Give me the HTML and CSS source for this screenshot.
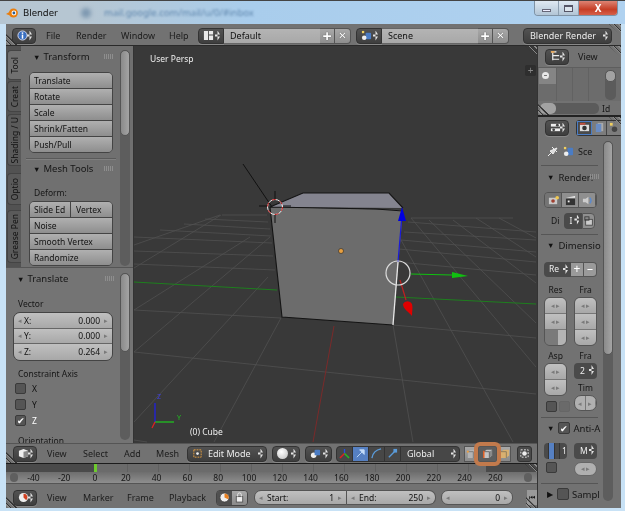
FILE: index.html
```html
<!DOCTYPE html>
<html lang="en">
<head>
<meta charset="utf-8">
<title>Blender</title>
<link rel="stylesheet" href="styles.css">
</head>
<body>
<div class="window">
  <header class="titlebar">
    <svg class="logo" viewBox="0 0 14 12"><circle cx="8" cy="6" r="4.800" fill="#e87d0d"/><circle cx="8.500" cy="6" r="2.600" fill="#fff"/><circle cx="8.500" cy="6" r="1.500" fill="#2a5f96"/><path d="M0 7l5-3v5z" fill="#e87d0d"/></svg>
    <span class="app-title">Blender</span>
    <i class="blur-dot"></i>
    <span class="blurred-tab">mail.google.com/mail/u/0/#inbox</span>
    <div class="win-controls">
      <span class="win-btn"><i class="min"></i></span>
      <span class="win-btn w-max"><i class="max"></i></span>
      <span class="win-btn close">X</span>
    </div>
  </header>
  <div class="app">
    <div class="menubar">
      <span class="pick w24"><svg class="ic" viewBox="0 0 12 12"><circle cx="6" cy="6" r="5" fill="#3a6fc0" stroke="#dde"/><rect x="5.200" y="5" width="1.600" height="4.500" fill="#fff"/><rect x="5.200" y="2.600" width="1.600" height="1.600" fill="#fff"/></svg><b class="updown"></b></span>
      <nav class="menu m-top"><span>File</span><span>Render</span><span>Window</span><span>Help</span></nav>
      <span class="pick w26"><svg class="ic" viewBox="0 0 12 12"><path d="M1 1h4.500v10H1zM6.500 1H11v4H6.500zM6.500 6H11v5H6.500z" fill="#e8e8e8"/></svg><b class="updown"></b></span>
      <span class="field">Default</span>
      <span class="sq">+</span><span class="sq last">✕</span>
      <span class="pick w26 l-scene"><svg class="ic" viewBox="0 0 12 12"><rect x="5" y="3" width="6" height="7" rx="1" fill="#4a7cc4"/><circle cx="3.500" cy="8.500" r="2.500" fill="#eee"/><rect x="1" y="1" width="2.500" height="2.500" fill="#f0d060"/></svg><b class="updown"></b></span>
      <span class="field">Scene</span>
      <span class="sq">+</span><span class="sq last">✕</span>
      <span class="pick render">Blender Render<b class="updown"></b></span>
      <i class="hatch h-tr"></i><i class="hatch h-bl"></i>
    </div>
    <div class="middle">
      <div class="main-col">
        <div class="work">
          <aside class="left">
            <div class="tool-shelf">
              <div class="tabs">
                <span class="tab active t-tool"><em>Tool</em></span>
                <span class="tab t-creat"><em>Creat</em></span>
                <span class="tab t-shade"><em>Shading / U</em></span>
                <span class="tab t-optio"><em>Optio</em></span>
                <span class="tab t-grease"><em>Grease Pen</em></span>
              </div>
              <div class="shelf-body">
                <h3 class="ph"><span class="tri">▼</span>Transform<span class="grip"></span></h3>
                <div class="stack s-transform">
                  <button>Translate</button><button>Rotate</button><button>Scale</button><button>Shrink/Fatten</button><button>Push/Pull</button>
                </div>
                <hr class="sep">
                <h3 class="ph"><span class="tri">▼</span>Mesh Tools<span class="grip"></span></h3>
                <p class="label deform">Deform:</p>
                <div class="stack">
                  <div class="pair"><button class="slide">Slide Ed</button><button class="vertex">Vertex</button></div>
                  <button>Noise</button><button>Smooth Vertex</button><button>Randomize</button>
                </div>
              </div>
              <div class="scroll s-shelf"><i></i></div>
            </div>
            <div class="redo">
              <div class="redo-body">
                <h3 class="ph"><span class="tri">▼</span>Translate<span class="grip"></span></h3>
                <p class="label vector">Vector</p>
                <div class="num-stack">
                  <div class="num"><span class="arr">◂</span><span>X:</span><span class="val">0.000</span><span class="arr">▸</span></div>
                  <div class="num"><span class="arr">◂</span><span>Y:</span><span class="val">0.000</span><span class="arr">▸</span></div>
                  <div class="num"><span class="arr">◂</span><span>Z:</span><span class="val">0.264</span><span class="arr">▸</span></div>
                </div>
                <p class="label cons">Constraint Axis</p>
                <div class="check"><i class="box"></i>X</div>
                <div class="check"><i class="box"></i>Y</div>
                <div class="check on"><i class="box">✔</i>Z</div>
                <p class="label orient">Orientation</p>
              </div>
              <div class="scroll s-redo"><i></i></div>
            </div>
          </aside>
          <section class="viewport">
            <svg class="scene" viewBox="134 46 402 397" aria-hidden="true">
              <g class="grid">
                <path d="M222 215H267M205 219L268 222M184 224L270 229M160 230L271 236M134 237L272 243M134 251L273 256M134 264L275 270M134 310L281 318M134 352L536 394M134 440L147 442"/>
                <path d="M411 218H513M408 222L536 232M404 232L536 240M401 240L536 252M399 249L536 262M398 262L536 275M393 325L536 338"/>
                <path d="M134 422L268 277M214 442L281 318M134 352L270 237M134 310L250 237M134 268L221 215M134 245L220 215"/>
                <path d="M393 325L413 442M401 240L513 442M411 218L536 367M429 220L536 323M453 220L536 283M476 218L536 257M499 218L536 238"/>
              </g>
              <path class="axis-x" d="M134 282L277 290M396 297L536 304"/>
              <path class="axis-y" d="M334 326L313 442"/>
              <path class="lamp" d="M243 164L272 207"/>
              <polygon class="cube-top" points="270,207 303,193 389,193 403,208"/>
              <polygon class="cube-front" points="270,207 403,210 393,325 282,317"/>
              <path class="cube-edge" d="M270 207L303 193H389L403 208M270 207L376 209L403 211M270 207L282 317L393 325"/>
              <path class="cube-sel" d="M398 262L393 325"/>
              <circle cx="341" cy="251" r="2.500" fill="#e8a040" stroke="#222" stroke-width=".6"/>
              <path class="m-blue" d="M398 262L402 215"/>
              <polygon fill="#0000e0" points="402,207 398,221 406,221"/>
              <path class="m-green" d="M411 274L452 275"/>
              <polygon fill="#10c010" points="452,272 452,278 468,276"/>
              <path class="m-red" d="M400 280L406 300"/>
              <path fill="#e00000" d="M403 304a5 5 0 0 1 9 0c1 4 0 7 0 12c-3-4-9-7-9-12z"/>
              <circle class="m-ring" cx="398" cy="273" r="12"/>
              <circle class="c-white" cx="275" cy="207" r="7.500"/>
              <circle class="c-red" cx="275" cy="207" r="7.500"/>
              <path class="c-cross" d="M275 191V199M275 215V223M259 206H267M283 206H291"/>
              <g class="widget"><path class="w-z" d="M155 422V403"/><path class="w-y" d="M155 422H174"/><path class="w-x" d="M155 422L152 428"/></g>
            </svg>
            <span class="vp-label persp">User Persp</span>
            <span class="vp-label cube-name">(0) Cube</span>
            <span class="vp-label wz">Z</span>
            <span class="vp-label wy">Y</span>
            <span class="vp-plus">+</span>
            <i class="hatch h-tr"></i>
          </section>
        </div>
        <div class="vp-header">
          <span class="pick w24"><svg class="ic" viewBox="0 0 12 12"><path d="M1 3l5-2 5 2v6l-5 2-5-2z" fill="#eee"/><path d="M6 4v7l5-2V3z" fill="#888"/></svg><b class="updown"></b></span>
          <nav class="menu m-vp"><span>View</span><span>Select</span><span>Add</span><span>Mesh</span></nav>
          <span class="pick mode"><svg class="ic" viewBox="0 0 12 12"><rect x="2" y="2" width="8" height="8" fill="none" stroke="#e8a040" stroke-dasharray="2 1"/><circle cx="6" cy="6" r="1.500" fill="#eee"/></svg>Edit Mode<b class="updown"></b></span>
          <span class="pick shade"><i class="sphere"></i><b class="updown"></b></span>
          <span class="pick pivot"><svg class="ic" viewBox="0 0 12 12"><circle cx="4" cy="8" r="3" fill="#eee"/><rect x="5" y="2" width="6" height="6" rx="1" fill="#4a7cc4"/></svg><b class="updown"></b></span>
          <div class="manip">
            <span><svg class="ic" viewBox="0 0 12 12"><path d="M6 6V1" stroke="#2850e0" stroke-width="1.500"/><path d="M6 6L1 11" stroke="#e02020" stroke-width="1.500"/><path d="M6 6L11 11" stroke="#20c020" stroke-width="1.500"/></svg></span>
            <span class="active"><svg class="ic" viewBox="0 0 12 12"><path d="M2 10L9 3M5 2h5v5z" stroke="#c4dcf8" fill="#c4dcf8"/></svg></span>
            <span><svg class="ic" viewBox="0 0 12 12"><path d="M1 11C2 5 5 2 11 1" stroke="#5a9ad8" fill="none" stroke-width="1.500"/></svg></span>
            <span><svg class="ic" viewBox="0 0 12 12"><path d="M2 10L8 4" stroke="#5a9ad8" stroke-width="1.500"/><rect x="7" y="1" width="4" height="4" fill="#5a9ad8"/></svg></span>
            <span class="global">Global<b class="updown"></b></span>
          </div>
          <div class="selmode">
            <span><svg class="ic" viewBox="0 0 12 12"><path d="M2 4l3-2h6v6l-3 3H2z" fill="#b4b4b4"/><path d="M2 4h6v7" fill="none" stroke="#777"/><rect x="1" y="3" width="2" height="2" fill="#f0a040"/></svg></span>
            <span class="hl"><svg class="ic" viewBox="0 0 12 12"><path d="M2 4l3-2h6v6l-3 3H2z" fill="#c4c4c4"/><path d="M8 4v7L11 8V2z" fill="#8a8a8a"/><path d="M2 4h6v7" fill="none" stroke="#666"/><path d="M2 3v8" stroke="#f06020" stroke-width="1.500"/></svg></span>
            <span><svg class="ic" viewBox="0 0 12 12"><path d="M2 4l3-2h6v6l-3 3H2z" fill="#d8b070"/><path d="M2 4h6v7" fill="none" stroke="#8a7a5a"/></svg></span>
          </div>
          <span class="occl"><svg class="ic" viewBox="0 0 12 12"><rect x="2" y="2" width="8" height="8" fill="none" stroke="#eee" stroke-dasharray="2 1.500"/><circle cx="6" cy="6" r="2.500" fill="#eee"/></svg></span>
          <i class="hatch h-bl"></i>
        </div>
        <div class="timeline">
          <div class="strip"><i class="st-a"></i><i class="st-frame"></i><i class="st-b"></i><i class="st-a st-end"></i></div>
          <div class="ruler">
            <i class="knob"></i>
            <span>-40</span><span>-20</span><span>0</span><span>20</span><span>40</span><span>60</span><span>80</span><span>100</span><span>120</span><span>140</span><span>160</span><span>180</span><span>200</span><span>220</span><span>240</span><span>260</span>
            <i class="knob k-end"></i>
          </div>
          <i class="hatch h-tr"></i>
        </div>
        <div class="tl-header">
          <span class="pick w24"><svg class="ic" viewBox="0 0 12 12"><circle cx="6" cy="6" r="5" fill="#eee"/><path d="M6 6V2A4 4 0 0 1 9 9z" fill="#d04020"/></svg><b class="updown"></b></span>
          <nav class="menu m-tl"><span>View</span><span>Marker</span><span>Frame</span><span>Playback</span></nav>
          <div class="lockpair"><span><svg class="ic" viewBox="0 0 12 12"><circle cx="6" cy="6" r="5" fill="#eee" stroke="#444"/><path d="M6 6V1.500A4.500 4.500 0 0 1 10 8z" fill="#e88020"/></svg></span><span><svg class="ic" viewBox="0 0 12 12"><rect x="2.500" y="5" width="7" height="6" fill="#eee" stroke="#555"/><path d="M4 5V3a2 2 0 0 1 4 0v2" fill="none" stroke="#eee"/></svg></span></div>
          <div class="range r-start"><span class="arr">◂</span><span>Start:</span><span class="val">1</span><span class="arr">▸</span></div>
          <div class="range r-end"><span class="arr">◂</span><span>End:</span><span class="val">250</span><span class="arr">▸</span></div>
          <div class="range r-cur"><span class="arr">◂</span><span class="val">0</span><span class="arr">▸</span></div>
          <span class="jump">⏮</span>
          <i class="hatch h-bl"></i><i class="hatch h-br"></i>
        </div>
      </div>
      <aside class="right">
        <div class="outliner">
          <div class="out-head"><span class="pick w24"><svg class="ic" viewBox="0 0 12 12"><path d="M1 1h6M3 2v8M3 5h7M3 9h7" stroke="#eee" stroke-width="1.300" fill="none"/><path d="M1 1h4" stroke="#f0a040" stroke-width="1.500"/></svg><b class="updown"></b></span><span class="out-view">View</span></div>
          <div class="out-grid">
            <span class="out-row"><i class="minus">–</i></span><i class="gl g1"></i><i class="gl g2"></i><i class="gl g3"></i>
            <div class="v-thumb"><i></i></div>
          </div>
          <div class="out-foot"><div class="h-thumb"><i></i></div><span>Id</span></div>
          <i class="hatch h-tr"></i><i class="hatch h-bl"></i>
        </div>
        <div class="props">
          <div class="prop-head">
            <span class="pick w24"><svg class="ic" viewBox="0 0 12 12"><rect x="1" y="2" width="10" height="3" fill="#eee"/><rect x="1" y="7" width="10" height="3" fill="#eee"/><circle cx="8" cy="3.500" r="1.500" fill="#444"/><circle cx="4" cy="8.500" r="1.500" fill="#444"/></svg><b class="updown"></b></span>
            <div class="ctx"><span class="active"><svg class="ic" viewBox="0 0 12 12"><rect x="1" y="3" width="10" height="7" fill="#ddd"/><circle cx="6" cy="6.500" r="2.500" fill="#333"/><rect x="1" y="1" width="6" height="2" fill="#c05040"/></svg></span><span><svg class="ic" viewBox="0 0 12 12"><rect x="4" y="1" width="6" height="9" fill="#aaa"/><rect x="2" y="2" width="6" height="9" fill="#6a8cc4"/></svg></span><span><svg class="ic" viewBox="0 0 12 12"><circle cx="6" cy="8" r="3" fill="#444"/><rect x="1" y="1" width="3" height="3" fill="#f0d060"/></svg></span></div>
            <i class="hatch h-tr"></i>
          </div>
          <div class="prop-body">
            <div class="prop-col">
              <div class="ctx-row"><svg class="pin" viewBox="0 0 12 12"><path d="M1 11L5 7M5 2l5 5M3 6l3 3 4-6z" stroke="#eee" fill="#ddd"/></svg><svg class="ic" viewBox="0 0 12 12"><rect x="5" y="2" width="6" height="8" rx="1" fill="#4a7cc4"/><circle cx="3.500" cy="8.500" r="2.500" fill="#eee"/><rect x="1" y="1" width="2.500" height="2.500" fill="#f0d060"/></svg><span>Sce</span></div>
              <hr class="psep">
              <h3 class="ph2"><span class="tri">▼</span>Render:<span class="grip g-r"></span></h3>
              <div class="tri-btn">
                <span><svg class="ic" viewBox="0 0 12 12"><rect x="1" y="3" width="9" height="7" fill="#c8c8c8"/><circle cx="5.500" cy="6.500" r="2" fill="#a04030"/><circle cx="10" cy="3" r="2" fill="#f0c850"/></svg></span>
                <span><svg class="ic" viewBox="0 0 12 12"><rect x="1" y="4" width="10" height="7" fill="#333"/><path d="M1 3l10-2v2z" fill="#eee"/><rect x="3" y="6" width="2" height="2" fill="#eee"/></svg></span>
                <span><svg class="ic" viewBox="0 0 12 12"><path d="M1 4h3l3-2v8l-3-2H1z" fill="#ccc"/><path d="M8.500 3a4 4 0 0 1 0 6" stroke="#5a8ad0" fill="none" stroke-width="1.500"/></svg></span>
              </div>
              <div class="di-row"><span>Di</span><span class="di"><span class="di-pick">I<b class="updown"></b></span><span class="di-img"><svg class="ic" viewBox="0 0 12 12"><rect x="2" y="4" width="8" height="7" fill="#ccc" stroke="#444"/><rect x="1" y="1" width="5" height="4" fill="none" stroke="#333"/></svg></span></span></div>
              <hr class="psep p2">
              <h3 class="ph2"><span class="tri">▼</span>Dimensio</h3>
              <div class="re-row"><span class="re">Re<b class="updown"></b></span><span class="re-sq">+</span><span class="re-sq">–</span></div>
              <div class="grid2 g-labels"><span>Res</span><span>Fra</span></div>
              <div class="grid2">
                <div class="arrows"><span>◂ ▸</span><span>◂ ▸</span><span class="slider"></span></div>
                <div class="arrows"><span>◂ ▸</span><span>◂ ▸</span><span>◂ ▸</span></div>
              </div>
              <div class="grid2 g-labels g-asp"><span>Asp</span><span>Fra</span></div>
              <div class="grid2">
                <div class="asp-left">
                  <div class="arrows"><span>◂ ▸</span><span>◂ ▸</span></div>
                  <div class="two-checks"><i class="box"></i><i class="box dim"></i></div>
                </div>
                <div class="asp-right">
                  <span class="two-pick">2<b class="updown"></b></span>
                  <span class="tim">Tim</span>
                  <div class="tim-field"><span>◂</span><span>▸</span></div>
                </div>
              </div>
              <hr class="psep p3">
              <h3 class="ph2"><span class="tri">▼</span><i class="box boxh">✔</i><span class="clip">Anti-Al</span></h3>
              <div class="grid2 g-aa">
                <div class="aa-bar"><i></i><i class="blue"></i><i></i><span>1</span></div>
                <span class="two-pick">M<b class="updown"></b></span>
              </div>
              <div class="grid2 g-aa2"><div><i class="box"></i></div><div class="oval">◂ ▸</div></div>
              <hr class="psep p4">
              <h3 class="ph2"><span class="tri">▶</span><i class="box boxh"></i><span class="clip">Sampl</span></h3>
            </div>
            <div class="scroll s-prop"><i></i></div>
          </div>
        </div>
      </aside>
    </div>
  </div>
</div>
</body>
</html>
```

FILE: styles.css
```css
* { box-sizing: border-box; }
html, body { margin: 0; padding: 0; }
body { width: 625px; height: 511px; overflow: hidden; background: #c6dff2; font-family: "Noto Sans", "Open Sans", sans-serif; font-size: 8.5px; color: #111; }
.window { width: 625px; height: 511px; display: flex; flex-direction: column; padding: 0 4px 3px 5px; background: #c8e2f6; border-top: 1px solid #444; filter: blur(.4px); }
.titlebar { height: 23px; flex: none; display: flex; align-items: center; position: relative; background: linear-gradient(90deg, #b6c6d2 0, #b6c6d2 13%, #a9cdec 40%, #b0d2f0 100%); margin: 0 -4px 0 -5px; padding-left: 6px; }
.logo { width: 13px; height: 12px; }
.app-title { font-size: 9.5px; color: #111; width: 58px; margin-left: 4px; }
.blur-dot { width: 10px; height: 10px; border-radius: 50%; background: #7d98b0; filter: blur(2px); }
.blurred-tab { color: #5f86ad; font-size: 9.5px; margin-left: 13px; filter: blur(1.3px); }
.win-controls { position: absolute; right: 7px; top: 0; display: flex; height: 15px; border: 1px solid #7f92a4; border-top: 0; border-radius: 0 0 4px 4px; overflow: hidden; }
.win-btn { width: 24px; display: flex; align-items: center; justify-content: center; background: linear-gradient(#dfe9f2, #b2c5d6); border-right: 1px solid #8d9fb0; }
.w-max { width: 20px; }
.win-btn.close { width: 38px; background: linear-gradient(#dd8474, #c63e26 60%, #d6604a); color: #fff; font-weight: 700; font-size: 10px; border: 0; }
.min { width: 9px; height: 3px; background: #eef; border: 1px solid #667; margin-top: 5px; }
.max { width: 9px; height: 7px; border: 1px solid #556; border-top-width: 2px; background: #dde6ee; }

.hatch { position: absolute; width: 12px; height: 11px; background: repeating-linear-gradient(45deg, transparent 0 2px, #8a8a8a 2px 3px, #333 3px 4px); z-index: 2; }
.h-tr { right: 0; top: 0; clip-path: polygon(0 0, 100% 0, 100% 100%); }
.h-bl { left: 0; bottom: 0; clip-path: polygon(0 0, 100% 100%, 0 100%); }
.h-br { right: 0; bottom: 0; width: 11px; clip-path: polygon(0 0, 100% 100%, 0 100%); }

.app { flex: 1; min-height: 0; display: flex; flex-direction: column; background: #6f6f6f; margin-left: 1px; }
.menubar { height: 22px; flex: none; display: flex; align-items: center; padding: 2px 0 0 6px; background: #727272; border-bottom: 1px solid #2a2a2a; position: relative; }
.pick { height: 16px; background: linear-gradient(#525252, #3e3e3e); border: 1px solid #333; border-radius: 4px; display: flex; align-items: center; color: #ececec; flex: none; position: relative; padding-left: 4px; box-shadow: 0 1px 0 #888; }
.w24 { width: 24px; }
.w26 { width: 26px; border-radius: 4px 0 0 4px; }
.ic { width: 11px; height: 11px; flex: none; display: block; }
.updown { position: absolute; right: 3px; top: 2px; width: 5px; height: 10px; background: #e4e4e4; clip-path: polygon(50% 0, 100% 40%, 0 40%, 0 60%, 100% 60%, 50% 100%); }
.menu { display: flex; color: #1c1c1c; font-size: 9px; flex: none; }
.m-top { width: 152px; margin-left: 10px; }
.m-top span:nth-child(1) { width: 30px; }
.m-top span:nth-child(2) { width: 45px; }
.m-top span:nth-child(3) { width: 48px; }
.field { width: 96px; height: 16px; background: linear-gradient(#b4b4b4, #a8a8a8); border-top: 1px solid #666; border-bottom: 1px solid #666; display: flex; align-items: center; padding-left: 6px; color: #111; flex: none; font-size: 9px; }
.sq { width: 15px; height: 16px; background: linear-gradient(#a8a8a8, #8e8e8e); border: 1px solid #555; border-left: 0; display: flex; align-items: center; justify-content: center; color: #fff; font-size: 16px; font-weight: 700; line-height: 1; text-shadow: 0 0 1px #222; flex: none; }
.sq.last { border-radius: 0 4px 4px 0; font-size: 10px; font-family: "DejaVu Sans", sans-serif; width: 16px; }
.l-scene { margin-left: 5px; }
.render { width: 89px; margin-left: 14px; padding-left: 6px; font-size: 9px; }

.middle { flex: 1; min-height: 0; display: flex; }
.main-col { width: 531px; flex: none; display: flex; flex-direction: column; }
.work { height: 397px; flex: none; display: flex; }
.left { width: 128px; flex: none; display: flex; flex-direction: column; border-right: 1px solid #333; }
.tool-shelf { height: 222px; flex: none; display: flex; background: #707070; border-bottom: 1px solid #555; }
.tabs { width: 15px; flex: none; background: #525252; display: flex; flex-direction: column; align-items: flex-end; padding-top: 4px; }
.tab { width: 14px; background: #5a5a5a; border: 1px solid #444; border-right: 0; border-radius: 4px 0 0 4px; display: flex; align-items: center; justify-content: center; font-size: 8.5px; color: #111; }
.tab em { font-style: normal; writing-mode: vertical-rl; transform: rotate(180deg); white-space: nowrap; }
.tab.active { background: #707070; }
.t-tool { height: 30px; margin-bottom: 1px; }
.t-creat { height: 31px; margin-bottom: 2px; }
.t-shade { height: 52px; margin-bottom: 7px; }
.t-optio { height: 32px; margin-bottom: 5px; }
.t-grease { height: 53px; }
.shelf-body { width: 94px; flex: none; padding: 4px 0 0 8px; }
.ph { margin: 0; font-size: 9.5px; font-weight: 400; display: flex; align-items: center; height: 13px; color: #161616; position: relative; }
.tri { font-size: 7.5px; margin: 0 3px 0 4px; color: #111; }
.grip { position: absolute; right: 2px; top: 4px; width: 9px; height: 5px; background: repeating-linear-gradient(90deg, #8e8e8e 0 1px, transparent 1px 2px); }
.stack { width: 84px; border: 1px solid #444; border-radius: 5px; overflow: hidden; }
.s-transform { margin-top: 9px; }
.stack button, .pair { display: block; width: 100%; height: 16px; }
.stack button { background: linear-gradient(#b0b0b0, #8e8e8e); border: 0; border-bottom: 1px solid #444; padding: 0 0 0 4px; text-align: left; font: inherit; color: #111; white-space: nowrap; overflow: hidden; }
.stack > button:last-child { border-bottom: 0; height: 15px; }
.pair { display: flex; }
.pair .slide { width: 41px; flex: none; border-right: 1px solid #444; }
.pair .vertex { width: 43px; flex: none; padding-left: 5px; }
.sep { border: 0; border-top: 1px solid #5a5a5a; border-bottom: 1px solid #808080; margin: 5px 0 2px -3px; width: 90px; }
.label { margin: 0; color: #161616; font-size: 8.5px; height: 13px; line-height: 13px; }
.deform { margin: 11px 0 2px 5px; }
.scroll { width: 10px; border-radius: 5px; background: #5d5d5d; position: relative; flex: none; }
.scroll i { display: block; width: 100%; border-radius: 5px; background: linear-gradient(90deg, #8a8a8a, #a4a4a4); border: 1px solid #555; }
.s-shelf { margin: 4px 0 2px 5px; height: 216px; }
.s-shelf i { height: 86px; }
.redo { flex: 1; min-height: 0; display: flex; background: #747474; padding: 5px 0 0 7px; overflow: hidden; }
.redo-body { width: 100px; flex: none; }
.redo-body .ph { margin-top: -1px; }
.redo-body .grip { right: -1px; }
.vector { margin: 12px 0 2px 5px; }
.num-stack { width: 100px; border: 1px solid #444; border-radius: 7px; overflow: hidden; }
.num { height: 15.500px; display: flex; align-items: center; background: linear-gradient(#c0c0c0, #a8a8a8); border-bottom: 1px solid #666; padding: 0 4px; gap: 2px; }
.num:last-child { border-bottom: 0; }
.val { margin-left: auto; }
.arr { font-size: 7px; color: #7a7a7a; }
.num .val { margin-right: 2px; }
.cons { margin: 6px 0 1px 5px; }
.check { height: 16px; display: flex; align-items: center; margin-left: 2px; }
.box { display: inline-flex; width: 11px; height: 11px; background: #555; border: 1px solid #3a3a3a; border-radius: 2px; align-items: center; justify-content: center; color: #fff; font-style: normal; font-size: 9px; line-height: 1; flex: none; }
.check .box { margin-right: 6px; }
.check.on { color: #fff; }
.orient { margin: 5px 0 0 5px; }
.s-redo { margin-left: 7px; height: 167px; }
.s-redo i { height: 79px; }

.viewport { width: 403px; flex: none; position: relative; background: #393939; overflow: hidden; }
.scene { display: block; width: 402px; height: 397px; }
.grid path { stroke: #505050; stroke-width: .8; fill: none; }
.axis-x { stroke: #1e7f1e; fill: none; }
.axis-y { stroke: #7a2a2a; fill: none; }
.lamp { stroke: #111; fill: none; }
.cube-top { fill: #84848f; }
.cube-front { fill: #6c6c6c; }
.cube-edge { stroke: #141414; stroke-width: 1.100; fill: none; }
.cube-sel { stroke: #e8e8e8; stroke-width: 1.300; }
.m-blue { stroke: #1a1ad8; stroke-width: 1.200; }
.m-green { stroke: #10c010; stroke-width: 1.200; }
.m-red { stroke: #c02020; stroke-width: 1.200; }
.m-ring { fill: none; stroke: #dcdcdc; stroke-width: 1.200; }
.c-white { fill: none; stroke: #eee; stroke-width: 1; }
.c-red { fill: none; stroke: #c01818; stroke-width: 1; stroke-dasharray: 4 4; }
.c-cross { stroke: #111; stroke-width: 1; }
.w-z { stroke: #2020e0; stroke-width: 1.300; } .w-y { stroke: #20c020; stroke-width: 1.300; } .w-x { stroke: #e02020; stroke-width: 1.300; }
.vp-label { position: absolute; color: #eee; font-size: 8.5px; white-space: nowrap; }
.persp { left: 16px; top: 7px; }
.cube-name { left: 56px; top: 380px; }
.wz { left: 23px; top: 346px; font-size: 7px; color: #4040e0; }
.wy { left: 43px; top: 367px; font-size: 7px; color: #20c020; }
.vp-plus { position: absolute; left: 391px; top: 19px; width: 11px; height: 11px; background: #2e2e2e; color: #888; border-radius: 2px; text-align: center; line-height: 11px; font-size: 10px; }

.vp-header, .tl-header { flex: none; display: flex; align-items: center; background: #727272; padding-left: 7px; position: relative; }
.vp-header { height: 21px; border-top: 1px solid #555; border-bottom: 1px solid #1c1c1c; }
.m-vp { margin-left: 10px; width: 136px; }
.m-vp span:nth-child(1) { width: 36px; }
.m-vp span:nth-child(2) { width: 41px; }
.m-vp span:nth-child(3) { width: 32px; }
.mode { width: 80px; margin-left: 4px; padding-left: 4px; gap: 5px; font-size: 9px; }
.shade { width: 28px; margin-left: 5px; }
.sphere { width: 11px; height: 11px; border-radius: 50%; background: radial-gradient(circle at 40% 35%, #fff, #bbb); }
.pivot { width: 27px; margin-left: 5px; }
.manip { display: flex; margin-left: 4px; height: 16px; border: 1px solid #333; border-radius: 4px; overflow: hidden; background: #474747; flex: none; }
.manip > span { width: 16px; display: flex; align-items: center; justify-content: center; border-right: 1px solid #333; }
.manip > span.active { background: #5680c2; }
.manip > .global { width: 58px; color: #ececec; position: relative; justify-content: flex-start; padding-left: 6px; border: 0; font-size: 9px; }
.selmode { display: flex; margin-left: 4px; flex: none; height: 16px; }
.selmode span { width: 14px; background: linear-gradient(#a8a8a8, #8a8a8a); border: 1px solid #555; display: flex; align-items: center; justify-content: center; }
.selmode .hl { width: 19px; background: #5e5e5e; outline: 4px solid #c27a4c; outline-offset: 0; border-radius: 2px; position: relative; z-index: 1; }
.occl { width: 15px; height: 16px; margin-left: 6px; background: #4a4a4a; border: 1px solid #333; border-radius: 3px; display: flex; align-items: center; justify-content: center; }

.timeline { height: 20px; flex: none; background: #6f6f6f; border-bottom: 1px solid #555; position: relative; }
.strip { height: 8px; display: flex; background: #6b6b6b; }
.st-a { width: 88px; background: #4a4a4a; flex: none; }
.st-frame { width: 3px; background: #6ecb2e; flex: none; }
.st-b { width: 389px; background: repeating-linear-gradient(90deg, #6b6b6b 0 30px, #606060 30px 31px); flex: none; }
.st-end { flex: 1; width: auto; }
.ruler { height: 11px; display: flex; align-items: center; background: linear-gradient(#6e6e6e, #8e8e8e); padding-left: 12px; color: #161616; font-size: 8.5px; position: relative; }
.ruler span { width: 30.800px; text-align: center; flex: none; }
.knob { position: absolute; left: 4px; top: 1px; width: 8px; height: 9px; border-radius: 4px; background: #5f5f5f; }
.k-end { left: auto; right: 5px; }
.tl-header { flex: 1; min-height: 0; padding-top: 3px; }
.m-tl { margin-left: 10px; width: 169px; }
.m-tl span:nth-child(1) { width: 36px; }
.m-tl span:nth-child(2) { width: 44px; }
.m-tl span:nth-child(3) { width: 42px; }
.lockpair { display: flex; height: 16px; border: 1px solid #444; border-radius: 4px; overflow: hidden; flex: none; }
.lockpair span { width: 15px; display: flex; align-items: center; justify-content: center; background: linear-gradient(#a8a8a8, #8a8a8a); }
.lockpair span:first-child { background: #505050; width: 15px; }
.range { height: 15px; margin-left: 6px; display: flex; align-items: center; gap: 4px; padding: 0 4px; background: linear-gradient(#c0c0c0, #a8a8a8); border: 1px solid #555; flex: none; }
.r-start { width: 93px; border-radius: 7px 0 0 7px; }
.r-end { width: 89px; margin-left: 0; border-left: 0; border-radius: 0 7px 7px 0; }
.r-cur { width: 72px; margin-left: 5px; border-radius: 7px; }
.jump { width: 11px; height: 15px; margin-left: 14px; background: #9a9a9a; font-size: 7px; line-height: 15px; text-align: center; }

.right { width: 84px; flex: none; display: flex; flex-direction: column; background: #727272; border-left: 1px solid #333; }
.outliner { height: 71px; flex: none; border-bottom: 2px solid #222; position: relative; }
.out-head { height: 21px; display: flex; align-items: center; padding-left: 7px; }
.out-view { margin-left: 9px; color: #161616; font-size: 9px; }
.out-grid { height: 34px; background: #6c6c6c; position: relative; border-top: 1px solid #5e5e5e; }
.out-row { position: absolute; left: 1px; top: 0; width: 17px; height: 16px; background: #858585; }
.minus { position: absolute; left: 3px; top: 4px; width: 7px; height: 7px; border-radius: 50%; background: #e8e8e8; color: #222; font-size: 7px; line-height: 6px; text-align: center; font-style: normal; }
.gl { position: absolute; top: 0; bottom: 0; width: 1px; background: #626262; }
.g1 { left: 18px; } .g2 { left: 34px; } .g3 { left: 50px; }
.v-thumb { position: absolute; right: 5px; top: 2px; width: 11px; height: 30px; border-radius: 5px; background: #5b5b5b; }
.v-thumb i { display: block; height: 12px; border-radius: 5px; background: #a2a2a2; border: 1px solid #555; }
.out-foot { display: flex; align-items: center; height: 14px; padding: 0 0 0 2px; gap: 3px; color: #161616; }
.h-thumb { width: 59px; height: 11px; border-radius: 5px; background: #5b5b5b; }
.h-thumb i { display: block; width: 16px; height: 100%; border-radius: 5px; background: #a2a2a2; }
.props { flex: 1; min-height: 0; display: flex; flex-direction: column; overflow: hidden; }
.prop-head { height: 21px; flex: none; display: flex; align-items: center; padding-left: 7px; position: relative; overflow: hidden; }
.ctx { margin-left: 7px; display: flex; height: 16px; border: 1px solid #333; border-radius: 3px; flex: none; }
.ctx span { width: 15px; display: flex; align-items: center; justify-content: center; background: #7c7c7c; border-right: 1px solid #444; flex: none; }
.ctx span.active { background: #4a4a4a; outline: 1px solid #4a7cc4; outline-offset: -1px; }
.prop-body { flex: 1; min-height: 0; display: flex; padding: 3px 0 0 3px; }
.prop-col { width: 60px; flex: none; }
.s-prop { margin-left: 2px; height: 360px; }
.s-prop i { height: 214px; }
.ctx-row { display: flex; align-items: center; height: 16px; gap: 4px; padding-left: 6px; color: #161616; margin-top: 2px; font-size: 9px; }
.pin { width: 12px; height: 12px; }
.psep { border: 0; border-top: 1px solid #565656; margin: 6px 0 4px; width: 57px; }
.ph2 { margin: 0; font-size: 9.5px; font-weight: 400; display: flex; align-items: center; height: 14px; white-space: nowrap; color: #161616; position: relative; overflow: hidden; }
.ph2 .tri { margin: 0 4px 0 6px; }
.g-r { right: 2px; }
.tri-btn { display: flex; width: 53px; height: 16px; margin: 8px 0 0 3px; border: 1px solid #555; border-radius: 4px; overflow: hidden; }
.tri-btn span { flex: 1; display: flex; align-items: center; justify-content: center; background: #8f8f8f; border-right: 1px solid #555; }
.tri-btn span:first-child { background: #747474; }
.di-row { display: flex; align-items: center; height: 17px; margin: 4px 0 0 10px; gap: 5px; color: #161616; }
.di { display: flex; height: 16px; width: 31px; }
.di-pick { width: 18px; background: #4a4a4a; border-radius: 4px 0 0 4px; color: #eee; padding-left: 5px; line-height: 15px; position: relative; }
.di-img { width: 13px; background: #8f8f8f; border: 1px solid #555; border-radius: 0 4px 4px 0; display: flex; align-items: center; justify-content: center; }
.di-img .ic { width: 10px; height: 10px; }
.p2 { margin-top: 5px; margin-bottom: 3px; }
.re-row { display: flex; width: 53px; height: 15px; margin: 10px 0 0 3px; }
.re { width: 27px; background: #4a4a4a; color: #eee; padding-left: 5px; line-height: 14px; position: relative; border-radius: 4px 0 0 4px; }
.re-sq { flex: 1; background: #9a9a9a; border: 1px solid #555; border-left: 0; color: #fff; font-size: 12px; text-align: center; line-height: 12px; }
.re-sq:last-child { border-radius: 0 4px 4px 0; }
.grid2 { display: flex; gap: 7px; margin-left: 3px; }
.grid2 > * { width: 23px; flex: none; }
.g-labels { height: 13px; margin-top: 6px; color: #161616; text-align: center; }
.g-labels span { line-height: 13px; }
.arrows { border: 1px solid #555; border-radius: 6px; overflow: hidden; width: 23px; margin-top: 1px; }
.arrows span { display: block; height: 16px; line-height: 15px; text-align: center; font-size: 7px; color: #7a7a7a; background: linear-gradient(#c0c0c0, #a8a8a8); border-bottom: 1px solid #777; }
.arrows span:last-child { border-bottom: 0; height: 15px; }
.arrows .slider { background: linear-gradient(90deg, #7a7a7a 0 62%, #b4b4b4 62%); }
.g-asp { margin-top: 3px; }
.asp-left { display: flex; flex-direction: column; }
.two-checks { display: flex; gap: 2px; margin: 5px 0 0 2px; width: 28px; }
.box.dim { background: #6a6a6a; border-color: #666; }
.asp-right { display: flex; flex-direction: column; margin-top: 1px; }
.two-pick { display: block; width: 23px; height: 16px; background: #4a4a4a; color: #eee; border-radius: 4px; padding-left: 6px; line-height: 15px; position: relative; }
.tim { height: 16px; line-height: 17px; text-align: center; color: #161616; }
.tim-field { display: flex; height: 16px; border: 1px solid #555; border-radius: 7px; overflow: hidden; font-size: 7px; color: #7a7a7a; background: #b0b0b0; }
.tim-field span { flex: 1; text-align: center; line-height: 15px; border-right: 1px solid #777; }
.p3 { margin-top: 5px; margin-bottom: 3px; }
.boxh { margin-right: 3px; width: 12px; height: 12px; }
.clip { display: block; overflow: hidden; color: #161616; }
.g-aa { margin-top: 8px; height: 16px; }
.aa-bar { display: flex; height: 16px; border-radius: 4px; overflow: hidden; background: #4a4a4a; color: #eee; }
.aa-bar i { width: 5px; border-right: 1px solid #333; }
.aa-bar .blue { background: #5680c2; width: 6px; }
.aa-bar span { padding-left: 2px; line-height: 15px; }
.g-aa2 { margin-top: 3px; }
.g-aa2 .box { margin-left: 2px; }
.oval { height: 14px; border: 1px solid #666; border-radius: 7px; background: #b0b0b0; font-size: 7px; color: #7a7a7a; text-align: center; line-height: 12px; }
.p4 { margin-top: 7px; margin-bottom: 3px; }
```
